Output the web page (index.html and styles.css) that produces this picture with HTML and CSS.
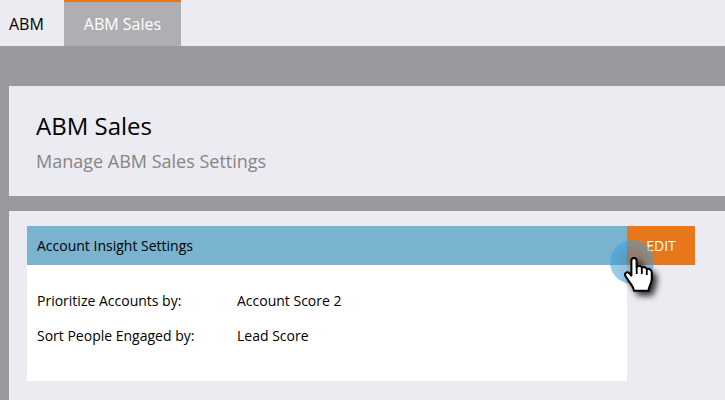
FILE: index.html
```html
<!DOCTYPE html>
<html lang="en">
<head>
<meta charset="utf-8">
<title>ABM Sales</title>
<link rel="stylesheet" href="styles.css">
</head>
<body>
<nav class="tabs">
  <a class="tab" href="#abm">ABM</a>
  <a class="tab tab-active" href="#sales" aria-current="page">ABM Sales</a>
</nav>
<main class="content">
  <header class="panel page-header">
    <h1 class="title">ABM Sales</h1>
    <p class="subtitle">Manage ABM Sales Settings</p>
  </header>
  <section class="panel settings">
    <div class="card">
      <h2 class="card-title">Account Insight Settings</h2>
      <dl class="fields">
        <dt>Prioritize Accounts by:</dt>
        <dd>Account Score 2</dd>
        <dt>Sort People Engaged by:</dt>
        <dd>Lead Score</dd>
      </dl>
    </div>
    <div class="action">
      <button class="edit" type="button">EDIT</button>
      <svg class="pointer" width="60" height="68" viewBox="0 0 60 68" aria-hidden="true">
        <defs>
          <radialGradient id="halo">
            <stop offset="0" stop-color="#4080a6" stop-opacity=".52"/>
            <stop offset=".5" stop-color="#3c8cc0" stop-opacity=".52"/>
            <stop offset="1" stop-color="#37a3e6" stop-opacity=".54"/>
          </radialGradient>
          <filter id="shadow" x="-40%" y="-40%" width="200%" height="200%">
            <feDropShadow dx="4" dy="4" stdDeviation="3" flood-color="#000" flood-opacity=".8"/>
          </filter>
        </defs>
        <circle cx="22" cy="23" r="22" fill="url(#halo)"/>
        <path filter="url(#shadow)" fill="#fff" stroke="#000" stroke-width="2" stroke-linejoin="round" d="M24 19c1.600 0 2.600 1.100 2.600 2.700v6.300c.8-1.500 4.700-1.200 5.200.8 1-1.300 4.500-.7 5 1.300 1.800-.8 5 .2 5 3.400v6.500c0 4-2.900 6.500-3.300 11.800H24c-.3-4-2.400-5.600-4.700-9.100l-3.600-5.200c-1.900-2.900.9-5.200 3.200-3.600l2.500 2.700V21.700c0-1.600 1-2.700 2.600-2.700z"/>
        <path fill="none" stroke="#000" stroke-width="1.800" d="M26.700 28v7M31.800 28.500v6.500M36.800 30v6"/>
      </svg>
    </div>
  </section>
</main>
</body>
</html>
```
FILE: styles.css
```css
* {
  box-sizing: border-box;
  margin: 0;
}

body {
  display: flex;
  flex-direction: column;
  min-height: 100vh;
  background: #9b999e;
  color: #000;
  font: 14px/20px "Open Sans", sans-serif;
}

.tabs {
  display: flex;
  background: #ecebf1;
}

.tab {
  padding: 10px 20px 10px 9px;
  border-top: 2px solid transparent;
  color: inherit;
  font-size: 16px;
  line-height: 24px;
  text-decoration: none;
}

.tab-active {
  padding-left: 20px;
  border-top-color: #e8761b;
  background: #afaeb3;
  color: #fff;
  font-weight: 500;
}

.content {
  display: flex;
  flex: 1;
  flex-direction: column;
  gap: 15px;
  padding: 40px 0 0 9px;
}

.panel {
  background: #ecebf1;
}

.page-header {
  padding: 24px 27px 23px;
}

.title {
  font-size: 24px;
  font-weight: 400;
  line-height: 32px;
}

.subtitle {
  padding-top: 7px;
  color: #858585;
  font-size: 18px;
  line-height: 24px;
}

.settings {
  display: flex;
  flex: 1;
  align-items: flex-start;
  padding: 15px 30px 19px 18px;
}

.card {
  flex: 1;
  background: #fff;
}

.card-title {
  height: 39px;
  padding: 0 10px;
  background: #7ab3cd;
  font-size: 14px;
  font-weight: 400;
  line-height: 39px;
}

.fields {
  display: grid;
  grid-template-columns: 200px 1fr;
  row-gap: 15px;
  padding: 26px 10px 35px;
}

.action {
  position: relative;
}

.edit {
  display: block;
  width: 68px;
  height: 39px;
  border: 0;
  background: #e8761b;
  color: #fff;
  font: inherit;
  cursor: pointer;
}

.pointer {
  position: absolute;
  top: 13px;
  left: -17px;
  pointer-events: none;
}
```
